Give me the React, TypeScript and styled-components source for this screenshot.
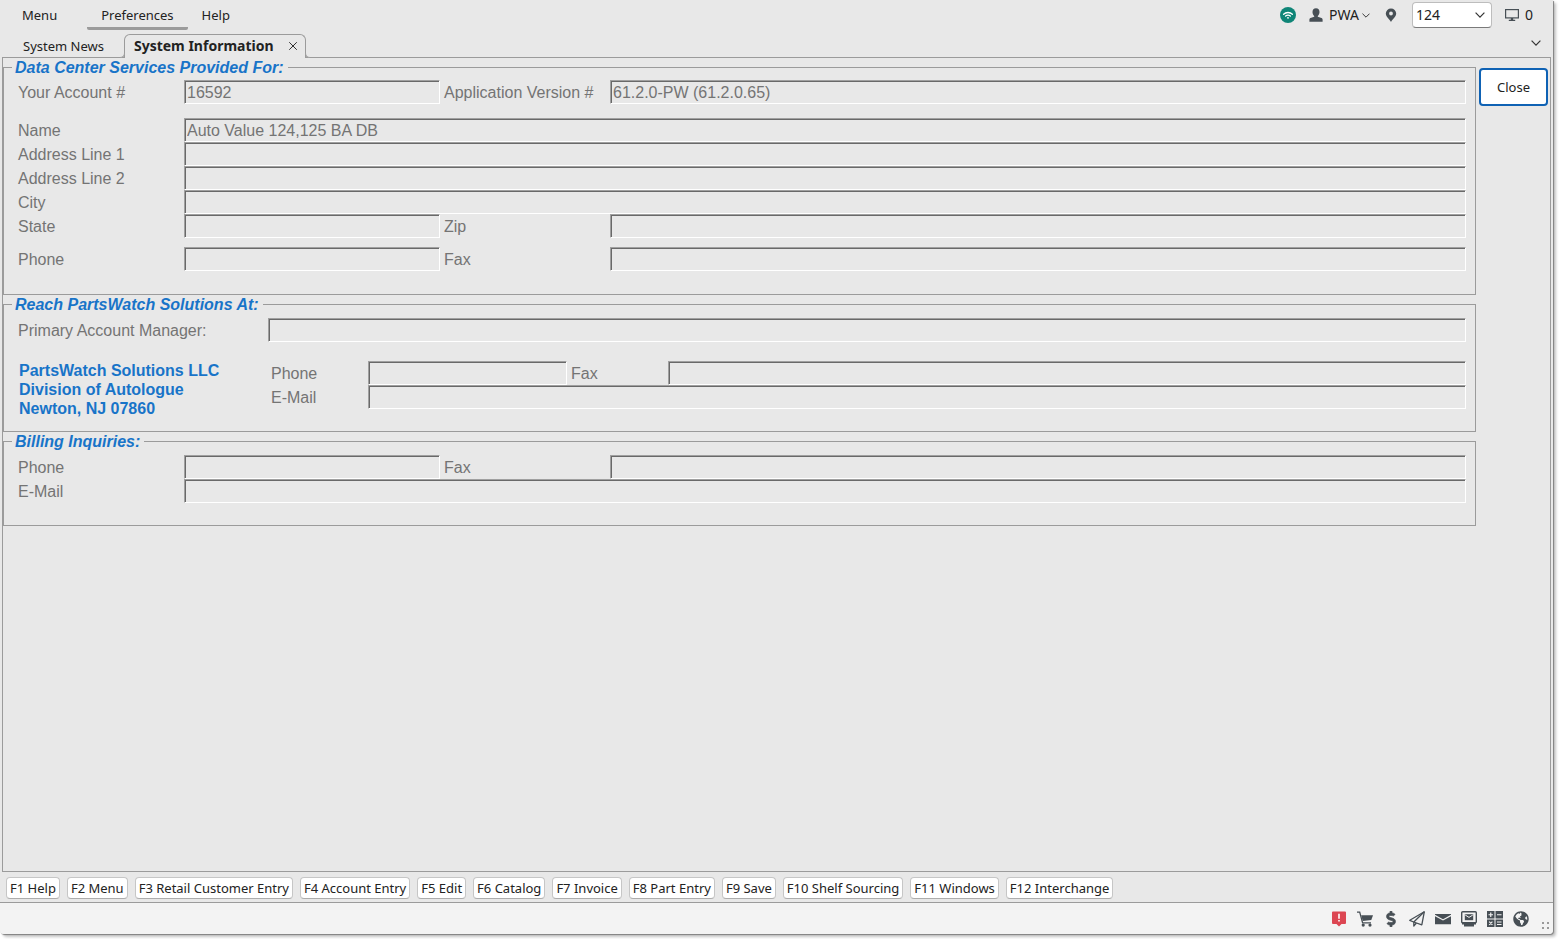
import React from "react";
import styled, { createGlobalStyle, css } from "styled-components";
import { X } from "lucide-react";
import { FaDollarSign, FaGlobeAmericas } from "react-icons/fa";

const UI_FONT = `"Noto Sans", "Open Sans", sans-serif`;
const FORM_FONT = `"Liberation Sans", Arial, sans-serif`;
const ICON = "#474f55";
const LINE = "#9b9b9b";
const BLUE = "#1874c8";
const SURFACE = "#e8e8e8";

const GlobalStyle = createGlobalStyle`
  *, *::before, *::after { box-sizing: border-box; }
  body { margin: 0; background: #fff; font: 13px/18px ${UI_FONT}; color: #222; }
  button, input, select { font: inherit; color: inherit; margin: 0; }
`;

const Page = styled.div`
  display: flex;
  min-height: 100vh;
  padding: 0 6px 5px 0;
`;

const Window = styled.div`
  flex: 1;
  min-width: 0;
  display: flex;
  flex-direction: column;
  background: ${SURFACE};
  border-radius: 0 0 4px 4px;
  box-shadow: 1px 1px 1px #808080, 3px 3px 3px #c4c4c4;
`;

const MenuBar = styled.header`
  display: flex;
  justify-content: space-between;
  height: 31px;
  padding: 0 20px 0 8px;
`;

const Menus = styled.nav`
  display: flex;
`;

const MenuButton = styled.button<{ $active?: boolean }>`
  height: 30px;
  padding: 0 14px;
  border: 0;
  background: none;
  ${(p) =>
    p.$active &&
    css`
      margin-left: 16px;
      border-bottom: 3px solid ${LINE};
      padding-top: 3px;
      border-radius: 2px;
    `}
`;

const Session = styled.div`
  display: flex;
  align-items: center;
  gap: 13px;
  padding-bottom: 1px;
  font-size: 14px;
`;

const SessionItem = styled.span`
  display: flex;
  align-items: center;
  gap: 6px;
`;

const UserButton = styled.button`
  display: flex;
  align-items: center;
  gap: 3px;
  padding: 0;
  border: 0;
  background: none;
`;

const SelectWrap = styled.div`
  position: relative;
  svg {
    position: absolute;
    right: 7px;
    top: 10px;
    pointer-events: none;
  }
`;

const StoreSelect = styled.select`
  display: block;
  appearance: none;
  width: 80px;
  height: 26px;
  padding: 0 3px;
  border: 1px solid #bdbdbd;
  border-bottom-color: #7a7a7a;
  border-radius: 4px;
  background: #fff;
`;

const TabBar = styled.div`
  display: flex;
  align-items: stretch;
  height: 27px;
  padding: 3px 12px 0 9px;
  position: relative;
  z-index: 1;
`;

const PlainTab = styled.button`
  padding: 0 20px 0 14px;
  border: 0;
  background: none;
`;

const ActiveTab = styled.div`
  position: relative;
  display: flex;
  align-items: center;
  gap: 12px;
  padding: 0 5px 1px 9px;
  border: 1px solid ${LINE};
  border-bottom: 0;
  border-radius: 6px 6px 0 0;
  background: ${SURFACE};

  &::before,
  &::after {
    content: "";
    position: absolute;
    bottom: 0;
    width: 5px;
    height: 5px;
    background: ${SURFACE};
    border: 0 solid ${LINE};
    border-bottom-width: 1px;
  }
  &::before {
    right: 100%;
    border-right-width: 1px;
    border-bottom-right-radius: 5px;
  }
  &::after {
    left: 100%;
    border-left-width: 1px;
    border-bottom-left-radius: 5px;
  }
`;

const TabLabel = styled.button`
  padding: 0;
  border: 0;
  background: none;
  font-size: 14px;
  font-weight: 700;
`;

const IconButton = styled.button<{ $end?: boolean }>`
  display: flex;
  align-items: center;
  align-self: ${(p) => (p.$end ? "flex-start" : "center")};
  height: 18px;
  padding: 0;
  border: 0;
  background: none;
  margin-left: ${(p) => (p.$end ? "auto" : "0")};
`;

const Panel = styled.main`
  flex: 1;
  display: flex;
  align-items: flex-start;
  gap: 3px;
  margin: -1px 2px 0;
  padding-right: 2px;
  border: 1px solid ${LINE};
`;

const Groups = styled.div`
  flex: 1;
  min-width: 0;
  font: 16px/18px ${FORM_FONT};
  color: #747474;
`;

const Group = styled.fieldset<{ $top?: number; $bottom?: number }>`
  min-width: 0;
  margin: 0;
  padding: ${(p) => p.$top ?? 5}px 9px ${(p) => p.$bottom ?? 23}px 14px;
  border: 1px solid ${LINE};
`;

const Legend = styled.legend`
  margin-left: -6px;
  padding: 2px 4px 0 3px;
  color: ${BLUE};
  font-weight: 700;
  font-style: italic;
  line-height: 16px;
`;

const columns = {
  wide: "166px 256px 170px 1fr",
  manager: "250px 1fr",
  contact: "97px 199px 101px 1fr",
};

const Row = styled.div<{ $cols: keyof typeof columns; $before?: number }>`
  display: grid;
  grid-template-columns: ${(p) => columns[p.$cols]};
  align-items: center;
  margin-top: ${(p) => p.$before ?? 0}px;
`;

const FieldLabel = styled.label<{ $inner?: boolean }>`
  padding: 2px 0 0 ${(p) => (p.$inner ? 4 : 0)}px;
`;

const Field = styled.input<{ $full?: boolean }>`
  width: 100%;
  height: 24px;
  padding: 2px 2px 0;
  grid-column: ${(p) => (p.$full ? "2 / -1" : "auto")};
  border: 1px solid #fff;
  border-top-color: #a0a0a0;
  border-left-color: #a0a0a0;
  border-radius: 0;
  box-shadow: inset 1px 1px #696969;
  background: transparent;
  color: #747474;
`;

const ContactBlock = styled.div`
  display: grid;
  grid-template-columns: 253px 1fr;
  margin-top: 19px;
`;

const Address = styled.address`
  padding-left: 1px;
  color: ${BLUE};
  font-style: normal;
  font-weight: 700;
  line-height: 19px;
`;

const CloseButton = styled.button`
  width: 69px;
  height: 38px;
  margin-top: 10px;
  border: 2px solid #0f62b4;
  border-radius: 4px;
  background: #fff;
`;

const FunctionBar = styled.div`
  display: flex;
  flex-wrap: wrap;
  gap: 7px;
  padding: 5px 6px 3px;
`;

const FunctionButton = styled.button`
  height: 22px;
  padding: 0 3px;
  border: 1px solid #c6c6c6;
  border-bottom-color: #adadad;
  border-radius: 4px;
  background: #fff;
`;

const StatusBar = styled.footer`
  display: flex;
  justify-content: flex-end;
  align-items: center;
  gap: 10px;
  height: 32px;
  padding-right: 4px;
  border-top: 1px solid ${LINE};
  border-radius: 0 0 4px 4px;
  background: #f3f3f3;
  color: ${ICON};
`;

const Grip = styled.svg`
  align-self: flex-end;
  margin-bottom: 5px;
`;

const Chevron = ({ width }: { width: number }) => (
  <svg width={width} height={width / 2 + 1} viewBox="0 0 10 6" fill="none" stroke="#333" strokeWidth="1.2" aria-hidden="true">
    <path d="M0.600 0.700L5 5.100 9.400.700" />
  </svg>
);

const WifiIcon = () => (
  <svg width="16" height="16" viewBox="0 0 16 16" aria-hidden="true">
    <circle cx="8" cy="8" r="8" fill="#0f8577" />
    <g fill="none" stroke="#fff" strokeWidth="1.3" strokeLinecap="round">
      <path d="M3.600 7.200C6 4.900 10 4.900 12.400 7.200" />
      <path d="M5.600 9.100c1.400-1.200 3.400-1.200 4.800 0" />
    </g>
    <circle cx="8" cy="10.800" r="0.900" fill="#fff" />
  </svg>
);

const UserIcon = () => (
  <svg width="14" height="14" viewBox="0 0 14 14" fill={ICON} aria-hidden="true">
    <path d="M7 .3c2.300 0 3.500 1.600 3.500 3.700 0 1.600-.7 3.100-1.700 3.900v.9l3.700 1.300c.8.300 1.100.9 1.100 1.700v1.900H.4v-1.900c0-.8.3-1.400 1.100-1.700l3.700-1.300v-.9C4.200 7.100 3.500 5.600 3.500 4 3.500 1.900 4.700.3 7 .3z" />
  </svg>
);

const PinIcon = () => (
  <svg width="16" height="16" viewBox="0 0 16 16" aria-hidden="true">
    <path
      fill={ICON}
      fillRule="evenodd"
      d="M8 1.500a5.200 5.200 0 0 1 5.200 5.100C13.200 9.600 9.800 12 8 15 6.200 12 2.800 9.600 2.800 6.600A5.200 5.200 0 0 1 8 1.500zM8 4.600a1.900 1.900 0 1 0 0 3.800 1.900 1.900 0 0 0 0-3.800z"
    />
  </svg>
);

const MonitorIcon = () => (
  <svg width="14" height="14" viewBox="0 0 14 14" aria-hidden="true">
    <rect x="0.600" y="1.600" width="12.800" height="8.300" fill="none" stroke={ICON} strokeWidth="1.200" />
    <path d="M5.800 10h2.400v1.700h2V13H3.800v-1.300h2z" fill={ICON} />
  </svg>
);

const AlertIcon = () => (
  <svg width="16" height="16" viewBox="0 0 16 16" aria-hidden="true">
    <path d="M2 .5h12a1 1 0 0 1 1 1V12a1 1 0 0 1-1 1h-3.500L8 15.500 5.500 13H2a1 1 0 0 1-1-1V1.500a1 1 0 0 1 1-1z" fill="#dc4652" />
    <path d="M7.200 2.800h1.600v5H7.200zM7.200 9h1.600v1.600H7.200z" fill="#fff" />
  </svg>
);

const CartIcon = () => (
  <svg width="16" height="16" viewBox="0 0 16 16" aria-hidden="true">
    <path d="M0 1.200h2.700L5.600 11.800H14" fill="none" stroke={ICON} strokeWidth="1.300" />
    <path d="M4.200 4.200H16L14.300 9 5.700 9.900z" fill={ICON} />
    <circle cx="6.200" cy="14.100" r="1.600" fill={ICON} />
    <circle cx="13" cy="14.100" r="1.600" fill={ICON} />
  </svg>
);

const PlaneIcon = () => (
  <svg width="16" height="16" viewBox="0 0 16 16" fill="none" stroke={ICON} strokeWidth="1.300" strokeLinejoin="round" aria-hidden="true">
    <path d="M15.300.800L.800 9.300l3.800 1.700 8.200 2.800z" />
    <path d="M15.300.800L4.800 11v4l2.600-3" />
  </svg>
);

const MailIcon = () => (
  <svg width="16" height="16" viewBox="0 0 16 16" fill={ICON} aria-hidden="true">
    <path d="M0 3h16v.8L8 8.200 0 3.800zM0 5.300l8 4.300 8-4.300V13.300H0z" />
  </svg>
);

const ScreenMailIcon = () => (
  <svg width="16" height="16" viewBox="0 0 16 16" aria-hidden="true">
    <rect x="0.700" y="0.700" width="14.600" height="11" rx="1" fill="none" stroke={ICON} strokeWidth="1.400" />
    <path d="M3.800 3.200h8.400v6H3.800z" fill={ICON} />
    <path d="M4.200 4L8 6.400 11.800 4" fill="none" stroke="#f3f3f3" strokeWidth="1" />
    <path d="M1 11.500h14v2h-2V15.500H3v-2H1z" fill={ICON} />
  </svg>
);

const CalcIcon = () => (
  <svg width="16" height="16" viewBox="0 0 16 16" aria-hidden="true">
    <path d="M0 0h7.500v7.500H0zM8.500 0H16v7.500H8.500zM0 8.500h7.500V16H0zM8.500 8.500H16V16H8.500z" fill={ICON} />
    <path
      d="M1.500 3.750h4.500M3.750 1.500V6M10 3.750h4.500M2.200 10.700l3.200 3.200M5.400 10.700l-3.200 3.200M10 11h4.500M10 13.500h4.500"
      stroke="#f3f3f3"
      strokeWidth="1.200"
    />
  </svg>
);

const FUNCTION_KEYS = [
  "F1 Help",
  "F2 Menu",
  "F3 Retail Customer Entry",
  "F4 Account Entry",
  "F5 Edit",
  "F6 Catalog",
  "F7 Invoice",
  "F8 Part Entry",
  "F9 Save",
  "F10 Shelf Sourcing",
  "F11 Windows",
  "F12 Interchange",
];

type CellProps = { id: string; label: string; value?: string; inner?: boolean; full?: boolean };

const Cell = ({ id, label, value = "", inner, full }: CellProps) => (
  <>
    <FieldLabel htmlFor={id} $inner={inner}>{label}</FieldLabel>
    <Field id={id} value={value} disabled readOnly $full={full} />
  </>
);

export default function App() {
  return (
    <Page>
      <GlobalStyle />
      <Window>
        <MenuBar>
          <Menus>
            <MenuButton>Menu</MenuButton>
            <MenuButton $active>Preferences</MenuButton>
            <MenuButton>Help</MenuButton>
          </Menus>
          <Session>
            <WifiIcon />
            <UserButton>
              <SessionItem>
                <UserIcon />
                PWA
              </SessionItem>
              <Chevron width={8} />
            </UserButton>
            <PinIcon />
            <SelectWrap>
              <StoreSelect aria-label="Store" defaultValue="124">
                <option>124</option>
                <option>125</option>
              </StoreSelect>
              <Chevron width={10} />
            </SelectWrap>
            <SessionItem>
              <MonitorIcon />0
            </SessionItem>
          </Session>
        </MenuBar>

        <TabBar>
          <PlainTab>System News</PlainTab>
          <ActiveTab>
            <TabLabel>System Information</TabLabel>
            <IconButton aria-label="Close tab">
              <X size={14} strokeWidth={1.6} />
            </IconButton>
          </ActiveTab>
          <IconButton $end aria-label="All tabs">
            <Chevron width={10} />
          </IconButton>
        </TabBar>

        <Panel>
          <Groups>
            <Group $top={4}>
              <Legend>Data Center Services Provided For:</Legend>
              <Row $cols="wide">
                <Cell id="account" label="Your Account #" value="16592" />
                <Cell id="version" label="Application Version #" value="61.2.0-PW (61.2.0.65)" inner />
              </Row>
              <Row $cols="wide" $before={14}>
                <Cell id="name" label="Name" value="Auto Value 124,125 BA DB" full />
              </Row>
              <Row $cols="wide">
                <Cell id="address1" label="Address Line 1" full />
              </Row>
              <Row $cols="wide">
                <Cell id="address2" label="Address Line 2" full />
              </Row>
              <Row $cols="wide">
                <Cell id="city" label="City" full />
              </Row>
              <Row $cols="wide">
                <Cell id="state" label="State" />
                <Cell id="zip" label="Zip" inner />
              </Row>
              <Row $cols="wide" $before={9}>
                <Cell id="phone" label="Phone" />
                <Cell id="fax" label="Fax" inner />
              </Row>
            </Group>

            <Group $bottom={13}>
              <Legend>Reach PartsWatch Solutions At:</Legend>
              <Row $cols="manager">
                <Cell id="manager" label="Primary Account Manager:" />
              </Row>
              <ContactBlock>
                <Address>
                  PartsWatch Solutions LLC
                  <br />
                  Division of Autologue
                  <br />
                  Newton, NJ 07860
                </Address>
                <div>
                  <Row $cols="contact">
                    <Cell id="reach-phone" label="Phone" />
                    <Cell id="reach-fax" label="Fax" inner />
                  </Row>
                  <Row $cols="contact">
                    <Cell id="reach-email" label="E-Mail" full />
                  </Row>
                </div>
              </ContactBlock>
            </Group>

            <Group $bottom={22}>
              <Legend>Billing Inquiries:</Legend>
              <Row $cols="wide">
                <Cell id="billing-phone" label="Phone" />
                <Cell id="billing-fax" label="Fax" inner />
              </Row>
              <Row $cols="wide">
                <Cell id="billing-email" label="E-Mail" full />
              </Row>
            </Group>
          </Groups>
          <CloseButton>Close</CloseButton>
        </Panel>

        <FunctionBar>
          {FUNCTION_KEYS.map((name) => (
            <FunctionButton key={name}>{name}</FunctionButton>
          ))}
        </FunctionBar>

        <StatusBar>
          <AlertIcon />
          <CartIcon />
          <FaDollarSign size={16} stroke="currentColor" strokeWidth={22} />
          <PlaneIcon />
          <MailIcon />
          <ScreenMailIcon />
          <CalcIcon />
          <FaGlobeAmericas size={16} />
          <Grip width="10" height="7" viewBox="0 0 10 7" fill="#9a9a9a" aria-hidden="true">
            <path d="M3 0h2v2H3zM8 0h2v2H8zM3 5h2v2H3zM8 5h2v2H8z" />
          </Grip>
        </StatusBar>
      </Window>
    </Page>
  );
}
